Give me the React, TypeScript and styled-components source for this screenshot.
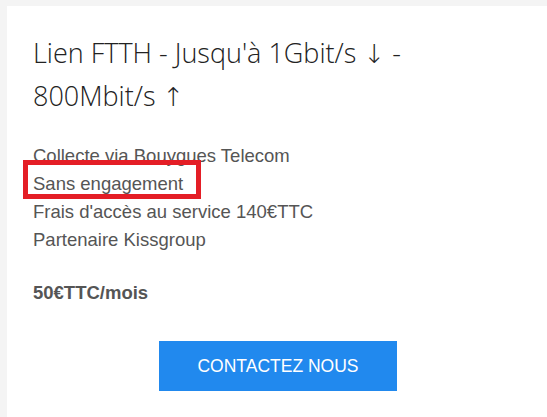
import React from "react";
import styled, { createGlobalStyle } from "styled-components";

const Global = createGlobalStyle`
  html, body { margin: 0; padding: 0; background: #f4f4f4; overflow: hidden; }
  body { width: 547px; height: 417px; }
`;

const Page = styled.div`
  padding: 6px 0 0 7px;
  height: 417px;
  box-sizing: border-box;
`;

const Card = styled.div`
  width: 542px;
  height: 420px;
  box-sizing: border-box;
  background: #ffffff;
  padding: 25px 26px 0 26px;
  display: flex;
  flex-direction: column;
`;

const Title = styled.h2`
  margin: 0;
  font-family: "Open Sans", sans-serif;
  font-weight: 300;
  font-size: 27px;
  line-height: 43px;
  color: #222;
`;

const Arrow = styled.span`
  font-family: "DejaVu Sans", sans-serif;
  font-weight: 200;
  font-size: 26px;
  line-height: 1;
`;

const Features = styled.ul`
  list-style: none;
  margin: 25px 0 0 0;
  padding: 0;
  font-family: "Liberation Sans", Arial, sans-serif;
  font-size: 18.5px;
  line-height: 28px;
  color: #555;
`;

const Feature = styled.li<{ $highlight?: boolean }>`
  position: relative;
  &::after {
    content: "";
    display: ${(p) => (p.$highlight ? "block" : "none")};
    position: absolute;
    left: -10px;
    top: -10px;
    width: 178px;
    height: 39px;
    box-sizing: border-box;
    border: 5px solid #e41e26;
  }
`;

const Price = styled.p`
  margin: 25px 0 0 0;
  font-family: "Liberation Sans", Arial, sans-serif;
  font-weight: bold;
  font-size: 18.5px;
  line-height: 28px;
  color: #555;
`;

const ButtonRow = styled.div`
  display: flex;
  justify-content: center;
  margin-top: 34px;
`;

const Button = styled.button`
  width: 238px;
  height: 50px;
  border: none;
  background: #2189ee;
  color: #fff;
  font-family: "Liberation Sans", Arial, sans-serif;
  font-size: 17.5px;
  text-transform: uppercase;
  cursor: pointer;
`;

export default function App() {
  return (
    <>
      <Global />
      <Page>
        <Card>
          <Title>
            Lien FTTH - Jusqu'à 1Gbit/s <Arrow>↓</Arrow> - 800Mbit/s <Arrow>↑</Arrow>
          </Title>
          <Features>
            <Feature>Collecte via Bouygues Telecom</Feature>
            <Feature $highlight>Sans engagement</Feature>
            <Feature>Frais d'accès au service 140€TTC</Feature>
            <Feature>Partenaire Kissgroup</Feature>
          </Features>
          <Price>50€TTC/mois</Price>
          <ButtonRow>
            <Button>Contactez nous</Button>
          </ButtonRow>
        </Card>
      </Page>
    </>
  );
}
